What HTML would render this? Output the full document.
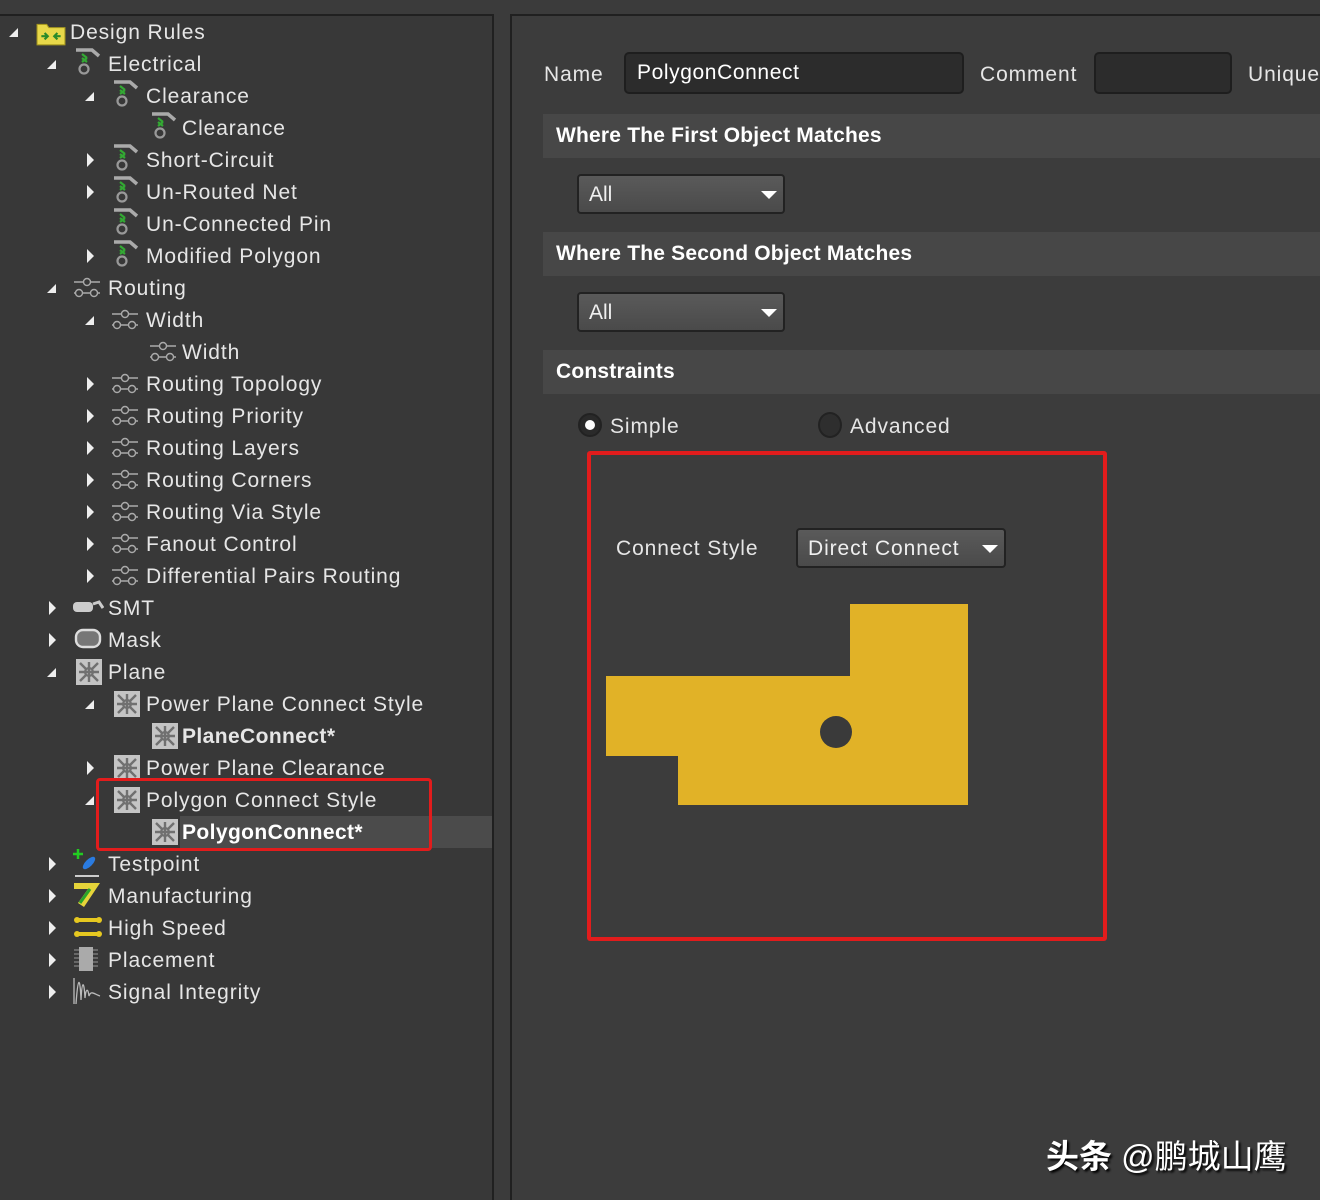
<!DOCTYPE html>
<html><head><meta charset="utf-8"><style>
*{margin:0;padding:0;box-sizing:border-box}
html,body{width:1320px;height:1200px;overflow:hidden}
body{background:#3b3b3b;position:relative;font-family:"Liberation Sans","DejaVu Sans",sans-serif;color:#e6e6e6}
.lp{position:absolute;left:0;top:14px;width:494px;height:1186px;background:#383838;border-top:2px solid #202020;border-right:2px solid #202020}
.rp{position:absolute;left:510px;top:14px;width:810px;height:1186px;background:#3c3c3c;border-top:2px solid #202020;border-left:2px solid #202020}
.row{position:absolute;height:32px;line-height:34px;font-size:21px;white-space:nowrap;letter-spacing:0.9px}
.arr{position:absolute;width:0;height:0}
.ex{border-left:9px solid transparent;border-bottom:9px solid #eee}
.co{border-top:7px solid transparent;border-bottom:7px solid transparent;border-left:7px solid #eee}
.ic{position:absolute;width:28px;height:28px}
.sec{position:absolute;left:543px;width:790px;height:44px;background:#474747;font-weight:bold;font-size:21px;line-height:44px;padding-left:13px;color:#fff;letter-spacing:0.2px}
.dd{position:absolute;left:577px;width:208px;height:40px;background:linear-gradient(#5a5a5a,#4a4a4a);border:2px solid #222;border-radius:4px;font-size:21px;line-height:38px;padding-left:10px;color:#f0f0f0}
.tri{position:absolute;right:6px;top:15px;border-left:8px solid transparent;border-right:8px solid transparent;border-top:8px solid #fff}
</style></head><body>
<div class="lp"></div>
<div class="rp"></div>

<svg width="0" height="0" style="position:absolute"><defs>
<g id="el"><path d="M2 3 L18 3 L25 9" stroke="#aaa" stroke-width="3.5" fill="none"/><path d="M8 7 l5 4 M8 11 l5 4 M8 15 l5 -4" stroke="#3a3" stroke-width="2.2"/><circle cx="10" cy="22" r="4.5" stroke="#999" stroke-width="2.2" fill="none"/></g>
<g id="rt"><path d="M2 9 H28 M2 20 H28" stroke="#aaa" stroke-width="1.6"/><circle cx="15" cy="9" r="3.5" fill="#383838" stroke="#aaa" stroke-width="1.4"/><circle cx="7" cy="20" r="3.5" fill="#383838" stroke="#aaa" stroke-width="1.4"/><circle cx="22" cy="20" r="3.5" fill="#383838" stroke="#aaa" stroke-width="1.4"/></g>
<g id="pl"><rect x="1" y="1" width="26" height="26" fill="#c4c4c4"/><path d="M5 5 l7 7 M23 5 l-7 7 M5 23 l7-7 M23 23 l-7-7 M14 4 v20 M4 14 h20" stroke="#707070" stroke-width="2.4"/><circle cx="14" cy="14" r="4" fill="none" stroke="#707070" stroke-width="2"/></g>
</defs></svg>

<div class="arr ex" style="left:9px;top:28px"></div>
<svg class="ic" style="left:36px;top:19px;width:30px" viewBox="0 0 28 26"><path d="M1 5 h9 l2 3 h15 v16 H1z" fill="#e8d84a" stroke="#a89a20"/><path d="M5 16 h6 m-3 -3 l3 3 l-3 3 M23 16 h-6 m3 -3 l-3 3 l3 3" stroke="#2a8a2a" stroke-width="2" fill="none"/></svg>
<div class="row" style="left:70px;top:16px">Design Rules</div>

<div class="arr ex" style="left:47px;top:60px"></div>
<svg class="ic" style="left:74px;top:47px"><use href="#el"/></svg>
<div class="row" style="left:108px;top:48px">Electrical</div>

<div class="arr ex" style="left:85px;top:92px"></div>
<svg class="ic" style="left:112px;top:79px"><use href="#el"/></svg>
<div class="row" style="left:146px;top:80px">Clearance</div>

<svg class="ic" style="left:150px;top:111px"><use href="#el"/></svg>
<div class="row" style="left:182px;top:112px">Clearance</div>

<div class="arr co" style="left:87px;top:153px"></div>
<svg class="ic" style="left:112px;top:143px"><use href="#el"/></svg>
<div class="row" style="left:146px;top:144px">Short-Circuit</div>

<div class="arr co" style="left:87px;top:185px"></div>
<svg class="ic" style="left:112px;top:175px"><use href="#el"/></svg>
<div class="row" style="left:146px;top:176px">Un-Routed Net</div>

<svg class="ic" style="left:112px;top:207px"><use href="#el"/></svg>
<div class="row" style="left:146px;top:208px">Un-Connected Pin</div>

<div class="arr co" style="left:87px;top:249px"></div>
<svg class="ic" style="left:112px;top:239px"><use href="#el"/></svg>
<div class="row" style="left:146px;top:240px">Modified Polygon</div>

<div class="arr ex" style="left:47px;top:284px"></div>
<svg class="ic" style="left:72px;top:273px;width:32px"><use href="#rt"/></svg>
<div class="row" style="left:108px;top:272px">Routing</div>

<div class="arr ex" style="left:85px;top:316px"></div>
<svg class="ic" style="left:110px;top:305px;width:32px"><use href="#rt"/></svg>
<div class="row" style="left:146px;top:304px">Width</div>

<svg class="ic" style="left:148px;top:337px;width:32px"><use href="#rt"/></svg>
<div class="row" style="left:182px;top:336px">Width</div>

<div class="arr co" style="left:87px;top:377px"></div><svg class="ic" style="left:110px;top:369px;width:32px"><use href="#rt"/></svg><div class="row" style="left:146px;top:368px">Routing Topology</div>
<div class="arr co" style="left:87px;top:409px"></div><svg class="ic" style="left:110px;top:401px;width:32px"><use href="#rt"/></svg><div class="row" style="left:146px;top:400px">Routing Priority</div>
<div class="arr co" style="left:87px;top:441px"></div><svg class="ic" style="left:110px;top:433px;width:32px"><use href="#rt"/></svg><div class="row" style="left:146px;top:432px">Routing Layers</div>
<div class="arr co" style="left:87px;top:473px"></div><svg class="ic" style="left:110px;top:465px;width:32px"><use href="#rt"/></svg><div class="row" style="left:146px;top:464px">Routing Corners</div>
<div class="arr co" style="left:87px;top:505px"></div><svg class="ic" style="left:110px;top:497px;width:32px"><use href="#rt"/></svg><div class="row" style="left:146px;top:496px">Routing Via Style</div>
<div class="arr co" style="left:87px;top:537px"></div><svg class="ic" style="left:110px;top:529px;width:32px"><use href="#rt"/></svg><div class="row" style="left:146px;top:528px">Fanout Control</div>
<div class="arr co" style="left:87px;top:569px"></div><svg class="ic" style="left:110px;top:561px;width:32px"><use href="#rt"/></svg><div class="row" style="left:146px;top:560px">Differential Pairs Routing</div>

<div class="arr co" style="left:49px;top:601px"></div>
<svg class="ic" style="left:72px;top:594px;width:32px" viewBox="0 0 32 28"><rect x="1" y="8" width="20" height="10" rx="4" fill="#ccc"/><path d="M21 10 l6 -2 l4 6" stroke="#ccc" stroke-width="3" fill="none"/></svg>
<div class="row" style="left:108px;top:592px">SMT</div>

<div class="arr co" style="left:49px;top:633px"></div>
<svg class="ic" style="left:74px;top:625px"><rect x="2" y="5" width="24" height="17" rx="7" fill="#777" stroke="#ddd" stroke-width="2.4"/></svg>
<div class="row" style="left:108px;top:624px">Mask</div>

<div class="arr ex" style="left:47px;top:668px"></div>
<svg class="ic" style="left:75px;top:658px"><use href="#pl"/></svg>
<div class="row" style="left:108px;top:656px">Plane</div>

<div class="arr ex" style="left:85px;top:700px"></div>
<svg class="ic" style="left:113px;top:690px"><use href="#pl"/></svg>
<div class="row" style="left:146px;top:688px">Power Plane Connect Style</div>

<svg class="ic" style="left:151px;top:722px"><use href="#pl"/></svg>
<div class="row" style="left:182px;top:720px;font-weight:bold;letter-spacing:0.4px">PlaneConnect*</div>

<div class="arr co" style="left:87px;top:761px"></div>
<svg class="ic" style="left:113px;top:754px"><use href="#pl"/></svg>
<div class="row" style="left:146px;top:752px">Power Plane Clearance</div>

<div style="position:absolute;left:180px;top:816px;width:312px;height:32px;background:#4b4b4b"></div>
<div class="arr ex" style="left:85px;top:796px"></div>
<svg class="ic" style="left:113px;top:786px"><use href="#pl"/></svg>
<div class="row" style="left:146px;top:784px">Polygon Connect Style</div>
<svg class="ic" style="left:151px;top:818px"><use href="#pl"/></svg>
<div class="row" style="left:182px;top:816px;font-weight:bold;color:#fff;letter-spacing:0.4px">PolygonConnect*</div>
<div style="position:absolute;left:96px;top:778px;width:336px;height:73px;border:3px solid #e21c1c;border-radius:4px"></div>

<div class="arr co" style="left:49px;top:857px"></div>
<svg class="ic" style="left:72px;top:847px;width:30px;height:30px" viewBox="0 0 30 30"><path d="M6 2 v10 M1 7 h10" stroke="#2c2" stroke-width="2.5"/><ellipse cx="17" cy="16" rx="3.5" ry="8" transform="rotate(45 17 16)" fill="#2a7be0"/><path d="M3 29 h24" stroke="#ccc" stroke-width="2"/></svg>
<div class="row" style="left:108px;top:848px">Testpoint</div>

<div class="arr co" style="left:49px;top:889px"></div>
<svg class="ic" style="left:72px;top:879px;width:30px;height:30px" viewBox="0 0 30 30"><path d="M2 4 H28 L12 28 L6 24 L16 10 H2z" fill="#e6d43a"/><path d="M8 24 L18 10" stroke="#2aa52a" stroke-width="3"/></svg>
<div class="row" style="left:108px;top:880px">Manufacturing</div>

<div class="arr co" style="left:49px;top:921px"></div>
<svg class="ic" style="left:72px;top:913px;width:32px" viewBox="0 0 30 28"><path d="M4 7 H26 M4 21 H26" stroke="#e6c820" stroke-width="4"/><circle cx="4" cy="7" r="3" fill="#e6c820"/><circle cx="26" cy="7" r="3" fill="#e6c820"/><circle cx="4" cy="21" r="3" fill="#e6c820"/><circle cx="26" cy="21" r="3" fill="#e6c820"/></svg>
<div class="row" style="left:108px;top:912px">High Speed</div>

<div class="arr co" style="left:49px;top:953px"></div>
<svg class="ic" style="left:72px;top:945px"><rect x="7" y="2" width="14" height="24" fill="#aaa"/><path d="M2 5h5M2 9h5M2 13h5M2 17h5M2 21h5M21 5h5M21 9h5M21 13h5M21 17h5M21 21h5" stroke="#999"/></svg>
<div class="row" style="left:108px;top:944px">Placement</div>

<div class="arr co" style="left:49px;top:985px"></div>
<svg class="ic" style="left:72px;top:976px;width:30px;height:30px" viewBox="0 0 30 30"><path d="M2 2 V28 M4 28 C6 0 8 0 9 24 C10 4 12 4 13 22 C14 12 16 12 17 20 C19 14 22 18 28 20" stroke="#bbb" stroke-width="1.3" fill="none"/></svg>
<div class="row" style="left:108px;top:976px">Signal Integrity</div>

<!-- right -->
<div class="row" style="left:544px;top:58px">Name</div>
<div style="position:absolute;left:624px;top:52px;width:340px;height:42px;background:#2c2c2c;border:2px solid #1e1e1e;border-radius:5px;font-size:21px;line-height:38px;padding-left:11px;color:#fff;letter-spacing:0.6px">PolygonConnect</div>
<div class="row" style="left:980px;top:58px">Comment</div>
<div style="position:absolute;left:1094px;top:52px;width:138px;height:42px;background:#2c2c2c;border:2px solid #1e1e1e;border-radius:5px"></div>
<div class="row" style="left:1248px;top:58px">Unique</div>

<div class="sec" style="top:114px">Where The First Object Matches</div>
<div class="dd" style="top:174px">All<div class="tri"></div></div>
<div class="sec" style="top:232px">Where The Second Object Matches</div>
<div class="dd" style="top:292px">All<div class="tri"></div></div>
<div class="sec" style="top:350px">Constraints</div>

<div style="position:absolute;left:578px;top:413px;width:24px;height:24px;border-radius:50%;background:#2a2a2a;border:2px solid #222"><div style="position:absolute;left:5px;top:5px;width:10px;height:10px;border-radius:50%;background:#fff"></div></div>
<div class="row" style="left:610px;top:410px">Simple</div>
<div style="position:absolute;left:818px;top:412px;width:24px;height:26px;border-radius:50%;background:#2e2e2e;border:2px solid #222"></div>
<div class="row" style="left:850px;top:410px">Advanced</div>

<div style="position:absolute;left:587px;top:451px;width:520px;height:490px;border:4px solid #e21c1c;border-radius:3px"></div>
<div class="row" style="left:616px;top:532px">Connect Style</div>
<div class="dd" style="left:796px;top:528px;width:210px;letter-spacing:0.9px">Direct Connect<div class="tri"></div></div>
<svg style="position:absolute;left:605px;top:603px" width="365" height="205"><path d="M245 1 H363 V202 H73 V153 H1 V73 H245z" fill="#e1b227"/><circle cx="231" cy="129" r="16" fill="#3a3a3a"/></svg>

<div style="position:absolute;left:1046px;top:1130px;font-family:'Liberation Sans','Noto Sans CJK SC',sans-serif;font-size:33px;color:#fff;text-shadow:2px 2px 2px #000;white-space:nowrap"><b>头条</b> @鹏城山鹰</div>
</body></html>
